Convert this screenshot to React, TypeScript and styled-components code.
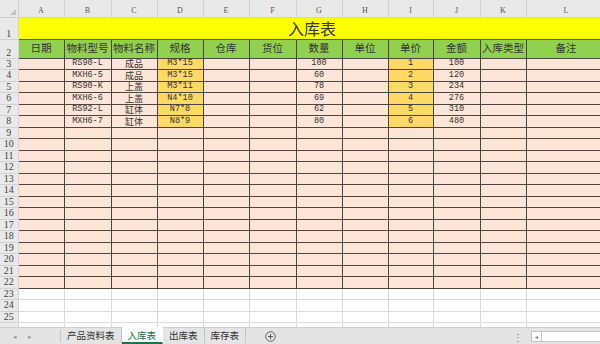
import React from 'react';
import styled, {createGlobalStyle} from 'styled-components';

const GlobalStyle = createGlobalStyle`
  html, body {
    margin: 0;
    padding: 0;
    background: #ffffff;
    overflow: hidden;
  }
  body {
    font-family: "Liberation Sans", "Noto Sans CJK SC", sans-serif;
  }
`;

type Row = {
    model: string;
    name: string;
    spec: string;
    qty: string;
    price: string;
    amount: string;
};

const widths = [18, 46, 47, 46, 46, 46, 47, 46, 46, 45, 47, 46, 80];
const letters = ['A', 'B', 'C', 'D', 'E', 'F', 'G', 'H', 'I', 'J', 'K', 'L'];
const headers = ['日期', '物料型号', '物料名称', '规格', '仓库', '货位', '数量', '单位', '单价', '金额', '入库类型', '备注'];

const rows: Row[] = [
    {model: 'RS90-L', name: '成品', spec: 'M3*15', qty: '100', price: '1', amount: '100'},
    {model: 'MXH6-5', name: '成品', spec: 'M3*15', qty: '60', price: '2', amount: '120'},
    {model: 'RS90-K', name: '上盖', spec: 'M3*11', qty: '78', price: '3', amount: '234'},
    {model: 'MXH6-6', name: '上盖', spec: 'N4*10', qty: '69', price: '4', amount: '276'},
    {model: 'RS92-L', name: '缸体', spec: 'N7*8', qty: '62', price: '5', amount: '310'},
    {model: 'MXH6-7', name: '缸体', spec: 'N8*9', qty: '80', price: '6', amount: '480'},
];

const tabs = ['产品资料表', '入库表', '出库表', '库存表'];

export default function App() {
    const emptyRows = Array.from({length: 14}, (_, i) => i + 9);
    // row 26 only peeks out above the tab bar, so its number stays hidden
    const blankRows = ['23', '24', '25', ''];

    const dataCells = (r?: Row) => {
        const vals = r
            ? ['', r.model, r.name, r.spec, '', '', r.qty, '', r.price, r.amount, '', '']
            : Array(12).fill('');
        return vals.map((v, i) => {
            const hot = !!r && (i === 3 || i === 8);
            return (
                <DataCell key={i} $hot={hot} $mono={i !== 2}>
                    {v}
                </DataCell>
            );
        });
    };

    return (
        <Page>
            <GlobalStyle/>
            <SheetArea>
                <Grid>
                    <colgroup>
                        {widths.map((w, i) => <col key={i} style={{width: w}}/>)}
                    </colgroup>
                    <tbody>
                    <Tr $h={17}>
                        <Corner><CornerMark/></Corner>
                        {letters.map(l => <ColHead key={l}>{l}</ColHead>)}
                    </Tr>
                    <Tr $h={22}>
                        <RowHead $align="bottom">1</RowHead>
                        <TitleCell colSpan={12}>入库表</TitleCell>
                    </Tr>
                    <Tr $h={19}>
                        <RowHead $align="bottom">2</RowHead>
                        {headers.map(h => <HeadCell key={h}>{h}</HeadCell>)}
                    </Tr>
                    {rows.map((r, i) => (
                        <Tr key={i} $h={11.5}>
                            <RowHead>{i + 3}</RowHead>
                            {dataCells(r)}
                        </Tr>
                    ))}
                    {emptyRows.map(n => (
                        <Tr key={n} $h={11.5}>
                            <RowHead>{n}</RowHead>
                            {dataCells()}
                        </Tr>
                    ))}
                    {blankRows.map((n, i) => (
                        <Tr key={i} $h={11.5}>
                            <RowHead>{n}</RowHead>
                            {letters.map(l => <BlankCell key={l}/>)}
                        </Tr>
                    ))}
                    </tbody>
                </Grid>
            </SheetArea>
            <TabBar>
                <NavArrows>
                    <Arrow>◂</Arrow>
                    <Arrow>▸</Arrow>
                </NavArrows>
                <Tabs>
                    {tabs.map(t => (
                        <Tab key={t} $active={t === '入库表'}>{t}</Tab>
                    ))}
                </Tabs>
                <AddButton>
                    <svg width="11" height="11" viewBox="0 0 12 12">
                        <circle cx="6" cy="6" r="5.2" fill="none" stroke="#555" strokeWidth="1"/>
                        <path d="M6 3.3v5.4M3.3 6h5.4" stroke="#555" strokeWidth="1.1"/>
                    </svg>
                </AddButton>
                <Spacer/>
                <Dots>⋮</Dots>
                <ScrollBox>
                    <ScrollArrow>◂</ScrollArrow>
                </ScrollBox>
            </TabBar>
        </Page>
    );
}

const Page = styled.div`
  width: 600px;
  height: 344px;
  display: flex;
  flex-direction: column;
  overflow: hidden;
  background: #ffffff;
`;

const SheetArea = styled.div`
  height: 327px;
  overflow: hidden;
  flex-shrink: 0;
`;

const Grid = styled.table`
  table-layout: fixed;
  border-collapse: collapse;
  width: 606px;
`;

const Tr = styled.tr<{ $h: number }>`
  height: ${p => p.$h}px;
`;

const Corner = styled.td`
  position: relative;
  background: #e9e9e9;
  border-right: 1px solid #cfcfcf;
  border-bottom: 1px solid #cfcfcf;
  padding: 0;
`;

const CornerMark = styled.div`
  position: absolute;
  right: 2px;
  bottom: 2px;
  width: 0;
  height: 0;
  border-left: 6px solid transparent;
  border-bottom: 6px solid #c4c4c4;
`;

const ColHead = styled.td`
  background: #e9e9e9;
  border: 1px solid #d2d2d2;
  border-top: none;
  color: #555;
  font-family: "Liberation Serif", serif;
  font-size: 8px;
  text-align: center;
  vertical-align: bottom;
  padding: 0 0 2px;
  line-height: 1;
`;

const RowHead = styled.td<{ $align?: string }>`
  background: #e9e9e9;
  border: 1px solid #d2d2d2;
  border-left: none;
  color: #444;
  font-family: "Liberation Serif", serif;
  font-size: 10px;
  text-align: center;
  vertical-align: ${p => p.$align || 'middle'};
  padding: 0;
  line-height: 1;
`;

const TitleCell = styled.td`
  background: #ffff00;
  border: 1px solid #555;
  border-top: none;
  color: #333;
  font-family: "Noto Sans CJK SC", sans-serif;
  font-size: 16px;
  text-align: center;
  vertical-align: middle;
  padding: 0;
  line-height: 1;
`;

const HeadCell = styled.td`
  background: #92d050;
  border: 1px solid #4a4a3a;
  color: #333;
  font-family: "Noto Sans CJK SC", sans-serif;
  font-size: 10.5px;
  text-align: center;
  vertical-align: middle;
  padding: 0;
  line-height: 1;
  white-space: nowrap;
  overflow: hidden;
`;

const DataCell = styled.td<{ $hot: boolean; $mono: boolean }>`
  background: ${p => (p.$hot ? '#ffd966' : '#fce4d6')};
  border: 1px solid #4f4540;
  color: #333;
  font-family: ${p => (p.$mono ? '"Liberation Mono", "Noto Sans CJK SC", monospace' : '"Noto Sans CJK SC", sans-serif')};
  font-size: ${p => (p.$mono ? '8.5px' : '9px')};
  text-align: center;
  vertical-align: middle;
  padding: 0;
  line-height: 9px;
  white-space: nowrap;
`;

const BlankCell = styled.td`
  border: 1px solid #dadada;
  padding: 0;
`;

const TabBar = styled.div`
  flex: 1;
  display: flex;
  align-items: stretch;
  background: #e4e4e4;
  border-top: 1px solid #cfcfcf;
  font-family: "Noto Sans CJK SC", sans-serif;
  font-size: 9.5px;
  color: #333;
`;

const NavArrows = styled.div`
  width: 61px;
  display: flex;
  align-items: center;
  gap: 11px;
  padding-left: 13px;
  box-sizing: border-box;
  border-right: 1px solid #c4c4c4;
  margin: 2px 0;
`;

const Arrow = styled.span`
  color: #9a9a9a;
  font-size: 7px;
`;

const Tabs = styled.div`
  display: flex;
`;

const Tab = styled.div<{ $active: boolean }>`
  display: flex;
  align-items: center;
  padding: 0 6px;
  background: ${p => (p.$active ? '#ffffff' : 'transparent')};
  color: ${p => (p.$active ? '#217346' : '#333')};
  border-bottom: 2px solid ${p => (p.$active ? '#217346' : 'transparent')};
  border-right: 1px solid ${p => (p.$active ? 'transparent' : '#c4c4c4')};
  margin-top: -1px;
  white-space: nowrap;
`;

const AddButton = styled.div`
  display: flex;
  align-items: center;
  padding-left: 19px;
`;

const Spacer = styled.div`
  flex: 1;
`;

const Dots = styled.div`
  display: flex;
  align-items: center;
  color: #777;
  font-size: 10px;
  padding-right: 8px;
`;

const ScrollBox = styled.div`
  width: 68px;
  margin: 3px 0 2px;
  background: #ffffff;
  border: 1px solid #c4c4c4;
  border-right: none;
  display: flex;
  align-items: center;
`;

const ScrollArrow = styled.span`
  width: 9px;
  height: 100%;
  display: flex;
  align-items: center;
  justify-content: center;
  font-size: 6px;
  color: #777;
  border-right: 1px solid #c4c4c4;
`;
